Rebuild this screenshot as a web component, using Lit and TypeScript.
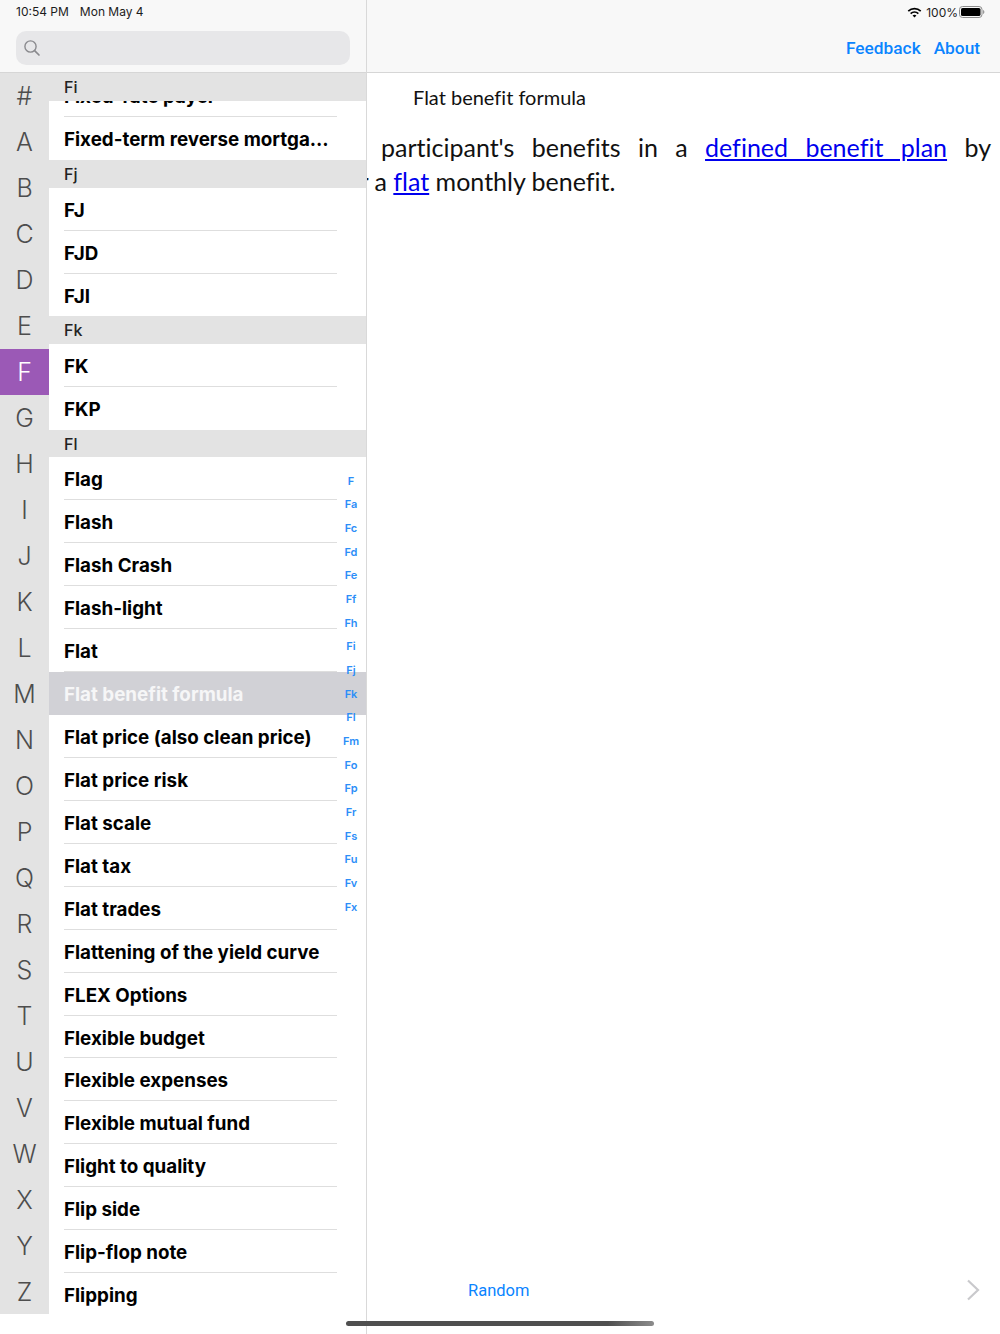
import { LitElement, css, html } from 'lit'
import { customElement } from 'lit/decorators.js'

type Section = { title: string; rows: string[] }

const LETTERS = '#ABCDEFGHIJKLMNOPQRSTUVWXYZ'.split('')
const SECTIONS: Section[] = [
  { title: '', rows: ['Fixed-rate payer', 'Fixed-term reverse mortgage'] },
  { title: 'Fj', rows: ['FJ', 'FJD', 'FJI'] },
  { title: 'Fk', rows: ['FK', 'FKP'] },
  {
    title: 'Fl',
    rows: [
      'Flag', 'Flash', 'Flash Crash', 'Flash-light', 'Flat', 'Flat benefit formula',
      'Flat price (also clean price)', 'Flat price risk', 'Flat scale', 'Flat tax', 'Flat trades',
      'Flattening of the yield curve', 'FLEX Options', 'Flexible budget', 'Flexible expenses',
      'Flexible mutual fund', 'Flight to quality', 'Flip side', 'Flip-flop note', 'Flipping',
    ],
  },
]
const INDEX = ['F', 'Fa', 'Fc', 'Fd', 'Fe', 'Ff', 'Fh', 'Fi', 'Fj', 'Fk', 'Fl', 'Fm', 'Fo', 'Fp', 'Fr', 'Fs', 'Fu', 'Fv', 'Fx']

@customElement('app-root')
export class AppRoot extends LitElement {
  static styles = css`
    :host {
      display: flex;
      width: 1000px;
      height: 1334px;
      overflow: hidden;
      position: relative;
      background: #fff;
      font-family: Inter, "Liberation Sans", sans-serif;
      color: #000;
    }

    .side {
      width: 366px;
      flex: none;
      display: flex;
      flex-direction: column;
      border-right: 1px solid #d9d9d9;
    }

    .head {
      height: 72px;
      flex: none;
      background: #f8f8f8;
      border-bottom: 1px solid #d6d6d6;
    }

    .side .head {
      padding: 0 16px;
    }

    .status {
      height: 24px;
      padding-top: 5px;
      box-sizing: border-box;
      display: flex;
      gap: 11px;
      font-size: 12px;
      line-height: 14px;
      color: #1c1c1c;
    }

    .search {
      margin-top: 7px;
      height: 34px;
      width: 334px;
      border-radius: 10px;
      background: #e7e7e9;
      display: flex;
      align-items: center;
      padding-left: 7px;
      box-sizing: border-box;
    }

    .body {
      flex: 1;
      display: flex;
      min-height: 0;
    }

    .alpha {
      width: 49px;
      height: 1241px;
      flex: none;
      background: #e3e3e3;
      display: grid;
      grid-auto-rows: 46px;
      font-size: 25px;
      font-weight: 300;
      color: #4d4d4d;
    }

    .alpha div {
      display: flex;
      align-items: center;
      justify-content: center;
    }

    .alpha .on {
      background: #9b59b6;
      color: #fff;
    }

    .list {
      flex: 1;
      min-width: 0;
      position: relative;
      overflow: hidden;
      padding-top: 1.3px;
    }

    .sec {
      height: 27.5px;
      box-sizing: border-box;
      padding: 2px 0 0 15px;
      background: #e3e3e3;
      font-size: 16px;
      font-weight: 500;
      line-height: 24px;
      color: #222;
    }

    .pinned {
      position: absolute;
      top: 0;
      left: 0;
      right: 0;
    }

    .row {
      height: 42.95px;
      box-sizing: border-box;
      margin-left: 15px;
      width: 273px;
      padding: 0 7px 1px 0;
      border-bottom: 1px solid #dedede;
      font-size: 18.8px;
      font-weight: 700;
      line-height: 45px;
      white-space: nowrap;
      overflow: hidden;
      text-overflow: ellipsis;
    }

    .row.last {
      border-bottom-color: transparent;
    }

    .row.sel {
      margin-left: 0;
      width: auto;
      padding-left: 15px;
      background: #d1d1d6;
      color: #f6f6f7;
      border-bottom: none;
    }

    .index {
      position: absolute;
      top: 396.5px;
      right: 0;
      width: 30px;
      display: flex;
      flex-direction: column;
      align-items: center;
      font-size: 11px;
      font-weight: 600;
      line-height: 23.67px;
      color: #2c8ef8;
    }

    .main {
      flex: 1;
      min-width: 0;
      display: flex;
      flex-direction: column;
    }

    .main .head {
      display: flex;
      flex-direction: column;
      padding: 0 20px 0 0;
    }

    .sys {
      height: 24px;
      display: flex;
      justify-content: flex-end;
      align-items: center;
      margin-right: -5px;
      font-size: 12px;
      color: #1c1c1c;
    }

    .sys span {
      margin: 0 1px 0 4px;
    }

    .actions {
      display: flex;
      justify-content: flex-end;
      gap: 13px;
      margin-top: 3px;
      font-family: Roboto, Inter, sans-serif;
      font-size: 17.3px;
      font-weight: 500;
      line-height: 42px;
      color: #0a84ff;
    }

    .doc {
      flex: 1;
      overflow: hidden;
      font-family: Lato, "Open Sans", sans-serif;
      font-variant-ligatures: none;
      color: #111;
    }

    .title {
      margin: 11px 0 0 46px;
      font-size: 20px;
      line-height: 26px;
    }

    .text {
      margin-top: 20px;
      font-size: 25px;
      line-height: 34px;
    }

    .line-a {
      margin: 0 9px 0 14px;
      text-align: justify;
      text-align-last: justify;
    }

    .line-b {
      margin-left: -30px;
      white-space: nowrap;
    }

    .text a {
      color: #0000ee;
      text-decoration: underline;
    }

    .foot {
      height: 64px;
      flex: none;
      display: flex;
      align-items: center;
      justify-content: space-between;
      padding: 0 20px 24px 101px;
      box-sizing: border-box;
      font-family: Roboto, Inter, sans-serif;
      font-size: 16.5px;
      color: #0a84ff;
    }

    .home {
      position: absolute;
      left: 346px;
      bottom: 8px;
      width: 308px;
      height: 5px;
      border-radius: 3px;
      background: linear-gradient(90deg, #4f4f4f 85%, #8c8c8c);
    }
  `

  renderRows(s: Section) {
    return s.rows.map((r, i) => {
      const cls = r === 'Flat benefit formula' ? 'row sel' : i === s.rows.length - 1 ? 'row last' : 'row'
      return html`<div class=${cls}>${r}</div>`
    })
  }

  render() {
    return html`
      <div class="side">
        <div class="head">
          <div class="status"><span>10:54 PM</span><span>Mon May 4</span></div>
          <div class="search">
            <svg width="18" height="18" viewBox="0 0 18 18" fill="none" stroke="#8a8a8e" stroke-width="1.4">
              <circle cx="7.5" cy="7.5" r="5.6"></circle>
              <path d="M11.6 11.6 16 16" stroke-linecap="round" stroke-width="1.7"></path>
            </svg>
          </div>
        </div>
        <div class="body">
          <div class="alpha">
            ${LETTERS.map(l => html`<div class=${l === 'F' ? 'on' : ''}>${l}</div>`)}
          </div>
          <div class="list">
            ${SECTIONS.map(s => html`
              ${s.title ? html`<div class="sec">${s.title}</div>` : ''}
              ${this.renderRows(s)}
            `)}
            <div class="sec pinned">Fi</div>
            <div class="index">${INDEX.map(i => html`<span>${i}</span>`)}</div>
          </div>
        </div>
      </div>
      <div class="main">
        <div class="head">
          <div class="sys">
            <svg width="15" height="11" viewBox="0 0 16 12" fill="none" stroke="#000" stroke-width="1.9">
              <path d="M1.2 4.6C5 1 11 1 14.8 4.6"></path>
              <path d="M3.8 7.2c2.4-2.2 6-2.2 8.4 0"></path>
              <path d="M8 11.4 5.9 9.3c1.2-1 3-1 4.2 0Z" fill="#000" stroke="none"></path>
            </svg>
            <span>100%</span>
            <svg width="26" height="12" viewBox="0 0 26 12">
              <rect x="0.5" y="0.5" width="22.5" height="11" rx="3" fill="none" stroke="#8c8c8c"></rect>
              <rect x="2" y="2" width="19.5" height="8" rx="1.6" fill="#000"></rect>
              <path d="M24 4v4c.8-.2 1.4-1 1.4-2s-.6-1.8-1.4-2Z" fill="#9a9a9a"></path>
            </svg>
          </div>
          <div class="actions"><span>Feedback</span><span>About</span></div>
        </div>
        <div class="doc">
          <div class="title">Flat benefit formula</div>
          <div class="text">
            <div class="line-a">participant's benefits in a <a>defined benefit plan</a> by</div>
            <div class="line-b">for a <a>flat</a> monthly benefit.</div>
          </div>
        </div>
        <div class="foot">
          <span>Random</span>
          <svg width="14" height="22" viewBox="0 0 14 22" fill="none" stroke="#c9c9cc" stroke-width="2.2">
            <path d="M2 1.5 12 11 2 20.5"></path>
          </svg>
        </div>
      </div>
      <div class="home"></div>
    `
  }
}
